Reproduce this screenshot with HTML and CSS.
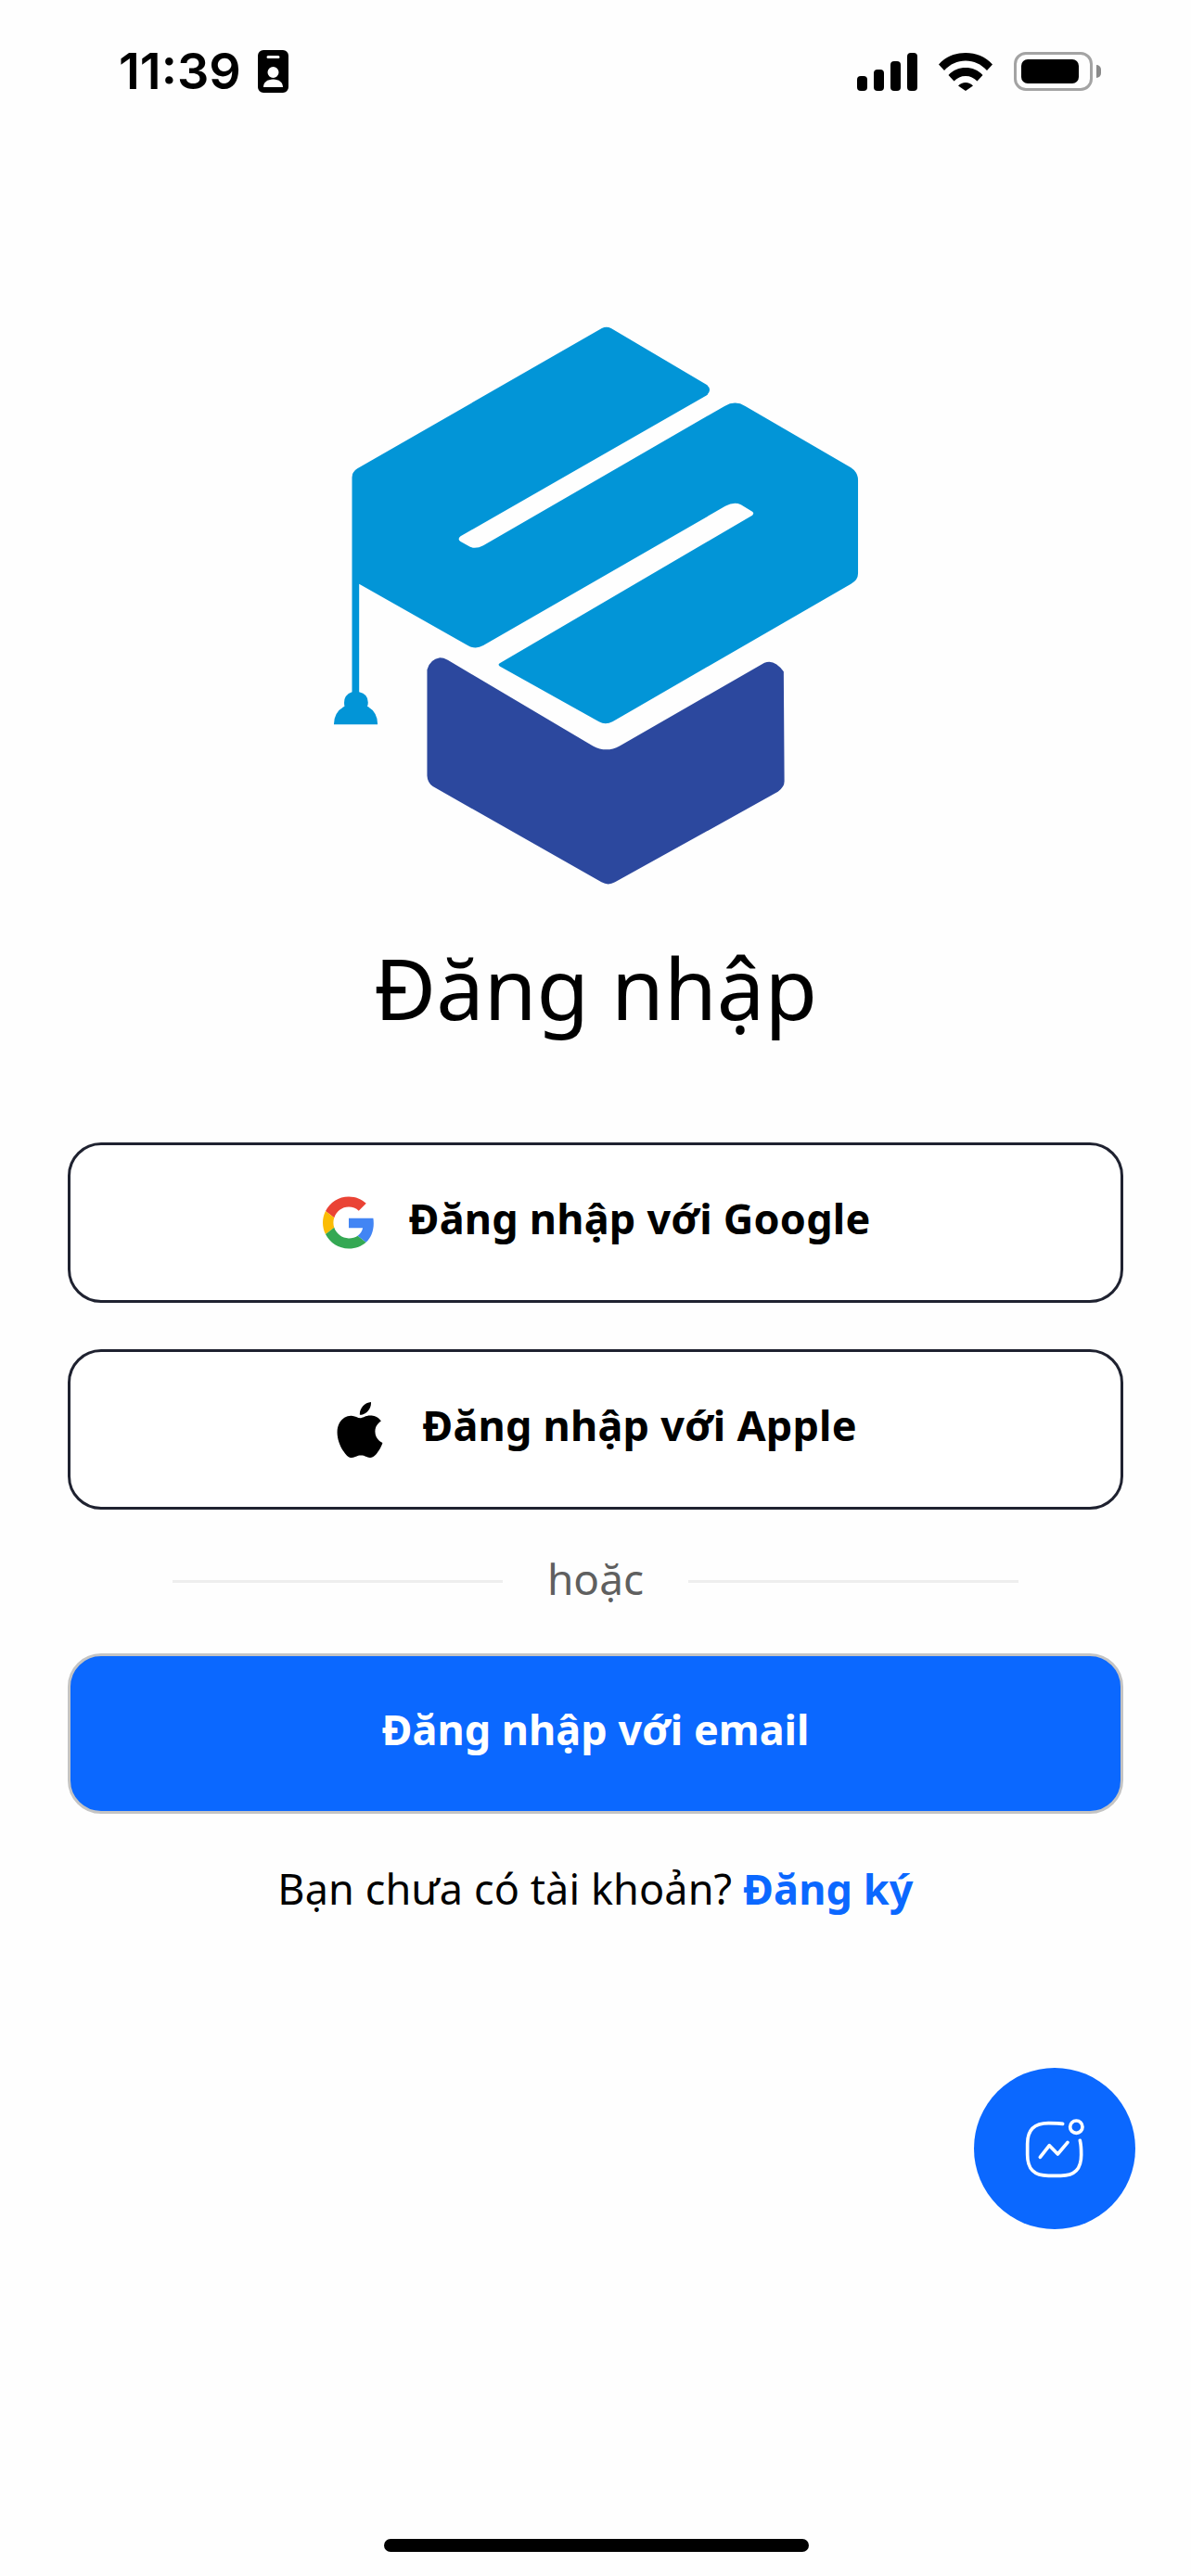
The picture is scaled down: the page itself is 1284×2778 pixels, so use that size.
FILE: index.html
```html
<!DOCTYPE html>
<html lang="vi">
<head>
    <meta charset="UTF-8">
    <meta name="viewport" content="width=device-width, initial-scale=1.0">
    <title>Đăng nhập</title>
    <link rel="stylesheet" href="styles.css">
</head>
<body>
    <div class="status-bar">
        <div class="status-left">
            <span class="time">11:39</span>
            <svg class="badge-icon" viewBox="0 0 33 46">
                <path fill="#000" fill-rule="evenodd" d="M6 0h21a6 6 0 0 1 6 6v34a6 6 0 0 1-6 6H6a6 6 0 0 1-6-6V6a6 6 0 0 1 6-6zM11 6a1.400 1.400 0 0 0 0 3h11a1.400 1.400 0 0 0 0-3zM16.500 18a6 6 0 1 0 0 12 6 6 0 0 0 0-12zM6 40h21c0-5-4-8.500-10.500-8.500S6 35 6 40z"/>
            </svg>
        </div>
        <div class="status-right">
            <div class="signal">
                <span class="bar bar-1"></span>
                <span class="bar bar-2"></span>
                <span class="bar bar-3"></span>
                <span class="bar bar-4"></span>
            </div>
            <svg class="wifi-icon" viewBox="0 0 58 42">
                <path d="M0 13.500C7.500 5 18 1 29 1s21.500 4 29 12.500l-6 6.500C45.500 13 38 9.500 29 9.500S12.500 13 6 20z"/>
                <path d="M10.500 25C15.500 19.500 22 17 29 17s13.500 2.500 18.500 8l-6 6.500C38 28 34 26 29 26s-9 2-12.500 5.500z"/>
                <path d="M21 36.500c2-2 5-3.500 8-3.500s6 1.500 8 3.500L29 42z"/>
            </svg>
            <div class="battery">
                <div class="battery-body"><div class="battery-fill"></div></div>
                <div class="battery-cap"></div>
            </div>
        </div>
    </div>

    <div class="login-container">
        <svg class="logo" viewBox="0 0 1564 1566" preserveAspectRatio="none">
            <path fill="#0295d7" d="M805 58Q818 52 831 58L1100 205Q1116 218 1100 232L408 598Q398 606 408 612L435 626Q452 632 472 622L1150 260Q1180 244 1208 260L1505 420Q1525 432 1525 452L1525 695Q1525 712 1505 722L835 1080Q815 1090 797 1080L518 936Q512 932 518 928L1228 544Q1234 538 1228 534L1196 516Q1176 508 1152 520L472 882Q450 894 428 882L123 722L123 1003Q148 1008 148 1030Q148 1036 146 1040Q175 1055 175 1087L52 1087Q52 1055 82 1040Q76 1012 103 1003L103 445Q103 430 118 422Z"/>
            <path fill="#2c489e" d="M314 945Q322 918 350 914Q360 914 372 920L780 1143Q818 1162 855 1143L1262 927Q1290 916 1316 950L1318 1235Q1318 1250 1300 1262L842 1497Q823 1507 804 1497L330 1248Q315 1238 314 1220Z"/>
        </svg>
        <h1>Đăng nhập</h1>

        <a class="login-btn outline-btn" href="#">
            <svg class="btn-icon google-icon" viewBox="0 0 48 48">
                <path fill="#EA4335" d="M24 9.500c3.540 0 6.710 1.220 9.210 3.600l6.850-6.850C35.900 2.380 30.470 0 24 0 14.620 0 6.510 5.380 2.560 13.220l7.980 6.190C12.430 13.720 17.740 9.500 24 9.500z"/>
                <path fill="#4285F4" d="M46.980 24.550c0-1.570-.15-3.090-.38-4.550H24v9.020h12.940c-.58 2.960-2.260 5.480-4.780 7.180l7.730 6c4.510-4.180 7.090-10.360 7.090-17.650z"/>
                <path fill="#FBBC05" d="M10.530 28.590c-.48-1.450-.76-2.990-.76-4.590s.27-3.140.76-4.590l-7.980-6.190C.92 16.460 0 20.120 0 24c0 3.880.92 7.540 2.560 10.780l7.970-6.190z"/>
                <path fill="#34A853" d="M24 48c6.480 0 11.930-2.130 15.890-5.810l-7.730-6c-2.150 1.450-4.920 2.300-8.160 2.300-6.260 0-11.570-4.220-13.470-9.910l-7.980 6.190C6.510 42.620 14.620 48 24 48z"/>
            </svg>
            <span>Đăng nhập với Google</span>
        </a>
        <a class="login-btn outline-btn" href="#">
            <svg class="btn-icon apple-icon" viewBox="0 0 24 24">
                <path fill="#000" d="M12.152 6.896c-.948 0-2.415-1.078-3.960-1.040-2.040.027-3.910 1.183-4.961 3.014-2.117 3.675-.546 9.103 1.519 12.090 1.013 1.454 2.208 3.090 3.792 3.039 1.520-.065 2.090-.987 3.935-.987 1.831 0 2.350.987 3.960.948 1.637-.026 2.676-1.480 3.676-2.948 1.156-1.688 1.636-3.325 1.662-3.415-.039-.013-3.182-1.221-3.220-4.857-.026-3.040 2.480-4.494 2.597-4.559-1.429-2.090-3.623-2.324-4.390-2.376-2-.156-3.675 1.090-4.610 1.090zM15.530 3.830c.843-1.012 1.400-2.427 1.245-3.830-1.207.052-2.662.805-3.532 1.818-.780.896-1.454 2.338-1.273 3.714 1.338.104 2.715-.688 3.559-1.701"/>
            </svg>
            <span>Đăng nhập với Apple</span>
        </a>

        <div class="divider">
            <span class="divider-line"></span>
            <span class="divider-text">hoặc</span>
            <span class="divider-line"></span>
        </div>

        <a class="login-btn email-btn" href="#">Đăng nhập với email</a>

        <p class="register-text">Bạn chưa có tài khoản? <a href="#">Đăng ký</a></p>
    </div>

    <button class="fab" type="button">
        <svg viewBox="0 0 210 210" fill="none" stroke="#fff" stroke-width="11" stroke-linecap="round" stroke-linejoin="round">
            <path d="M131 25C120 23 105 23 85 23C38 23 17 45 17 90C17 100 17 105 17 125C17 172 38 193 85 193C95 193 105 193 125 193C170 193 191 172 191 125C191 105 191 95 187 79"/>
            <circle cx="175" cy="35" r="20"/>
            <path d="M58 133L88 95L115 123L147 85"/>
        </svg>
    </button>

    <div class="home-bar"></div>
</body>
</html>
```
FILE: styles.css
```css
* {
    box-sizing: border-box;
}
html, body {
    margin: 0;
    padding: 0;
}
body {
    font-family: 'Noto Sans', sans-serif;
    background-color: #fefefe;
    width: 1284px;
    height: 2778px;
    position: relative;
    overflow: hidden;
    color: #000;
}

/* status bar */
.status-bar {
    display: flex;
    justify-content: space-between;
    align-items: center;
    height: 46px;
    margin-top: 54px;
    padding: 0 97px 0 128px;
}
.status-left {
    display: flex;
    align-items: center;
    gap: 18px;
}
.time {
    font-family: 'Inter', sans-serif;
    font-size: 54px;
    font-weight: 600;
    line-height: 46px;
}
.badge-icon {
    width: 33px;
    height: 46px;
}
.status-right {
    display: flex;
    align-items: center;
    gap: 23px;
}
.signal {
    display: flex;
    align-items: flex-end;
    gap: 7px;
    height: 41px;
}
.bar {
    width: 11px;
    background: #000;
    border-radius: 4px;
}
.bar-1 { height: 16px; }
.bar-2 { height: 23px; }
.bar-3 { height: 32px; }
.bar-4 { height: 41px; }
.wifi-icon {
    width: 58px;
    height: 42px;
}
.battery {
    display: flex;
    align-items: center;
    gap: 4px;
}
.battery-body {
    width: 85px;
    height: 42px;
    padding: 5px;
    border: 3px solid #a3a3a3;
    border-radius: 13px;
}
.battery-fill {
    width: 90%;
    height: 100%;
    background: #000;
    border-radius: 7px;
}
.battery-cap {
    width: 5px;
    height: 14px;
    background: #8a8a8a;
    border-radius: 0 7px 7px 0;
}

/* main column */
.login-container {
    display: flex;
    flex-direction: column;
    align-items: center;
    padding: 0 73px;
}
.logo {
    width: 600px;
    height: 650px;
    margin-top: 230px;
    margin-left: -4px;
}
h1 {
    font-size: 92px;
    font-weight: 400;
    line-height: 130px;
    margin: 20px 0 102px;
}
.login-btn {
    display: flex;
    justify-content: center;
    align-items: center;
    width: 100%;
    height: 173px;
    padding-bottom: 10px;
    border-radius: 36px;
    font-size: 45px;
    font-weight: 700;
    text-decoration: none;
}
.outline-btn {
    gap: 37px;
    color: #000;
    background: #fff;
    border: 3px solid #1f2230;
    margin-bottom: 50px;
    letter-spacing: 0.2px;
}
.btn-icon {
    flex: none;
    margin-top: 10px;
}
.google-icon {
    width: 56px;
    height: 57px;
    margin-left: 2px;
}
.apple-icon {
    width: 60px;
    height: 62px;
    margin-left: -2px;
}
.divider {
    display: flex;
    align-items: center;
    justify-content: center;
    width: 912px;
    height: 56px;
    margin-top: -1px;
    gap: 48px;
}
.divider-line {
    flex: 1;
    height: 3px;
    background: #eeeeee;
}
.divider-text {
    font-size: 46px;
    line-height: 56px;
    padding-bottom: 6px;
    color: #5f5f5f;
}
.email-btn {
    color: #fff;
    background: #0b68ff;
    border: 3px solid #c4c4c4;
    margin-top: 50px;
}
.register-text {
    font-size: 45px;
    line-height: 62px;
    letter-spacing: 0.1px;
    margin: 50px 0 0;
}
.register-text a {
    color: #0b68ff;
    font-weight: 700;
    text-decoration: none;
}

/* floating button and home indicator */
.fab {
    position: absolute;
    left: 1050px;
    top: 2230px;
    width: 174px;
    height: 174px;
    padding: 0;
    border: none;
    border-radius: 50%;
    background: #0b68ff;
    display: flex;
    align-items: center;
    justify-content: center;
}
.fab svg {
    width: 70px;
    height: 70px;
}
.home-bar {
    position: absolute;
    left: 414px;
    top: 2738px;
    width: 458px;
    height: 14px;
    background: #000;
    border-radius: 7px;
}
```
